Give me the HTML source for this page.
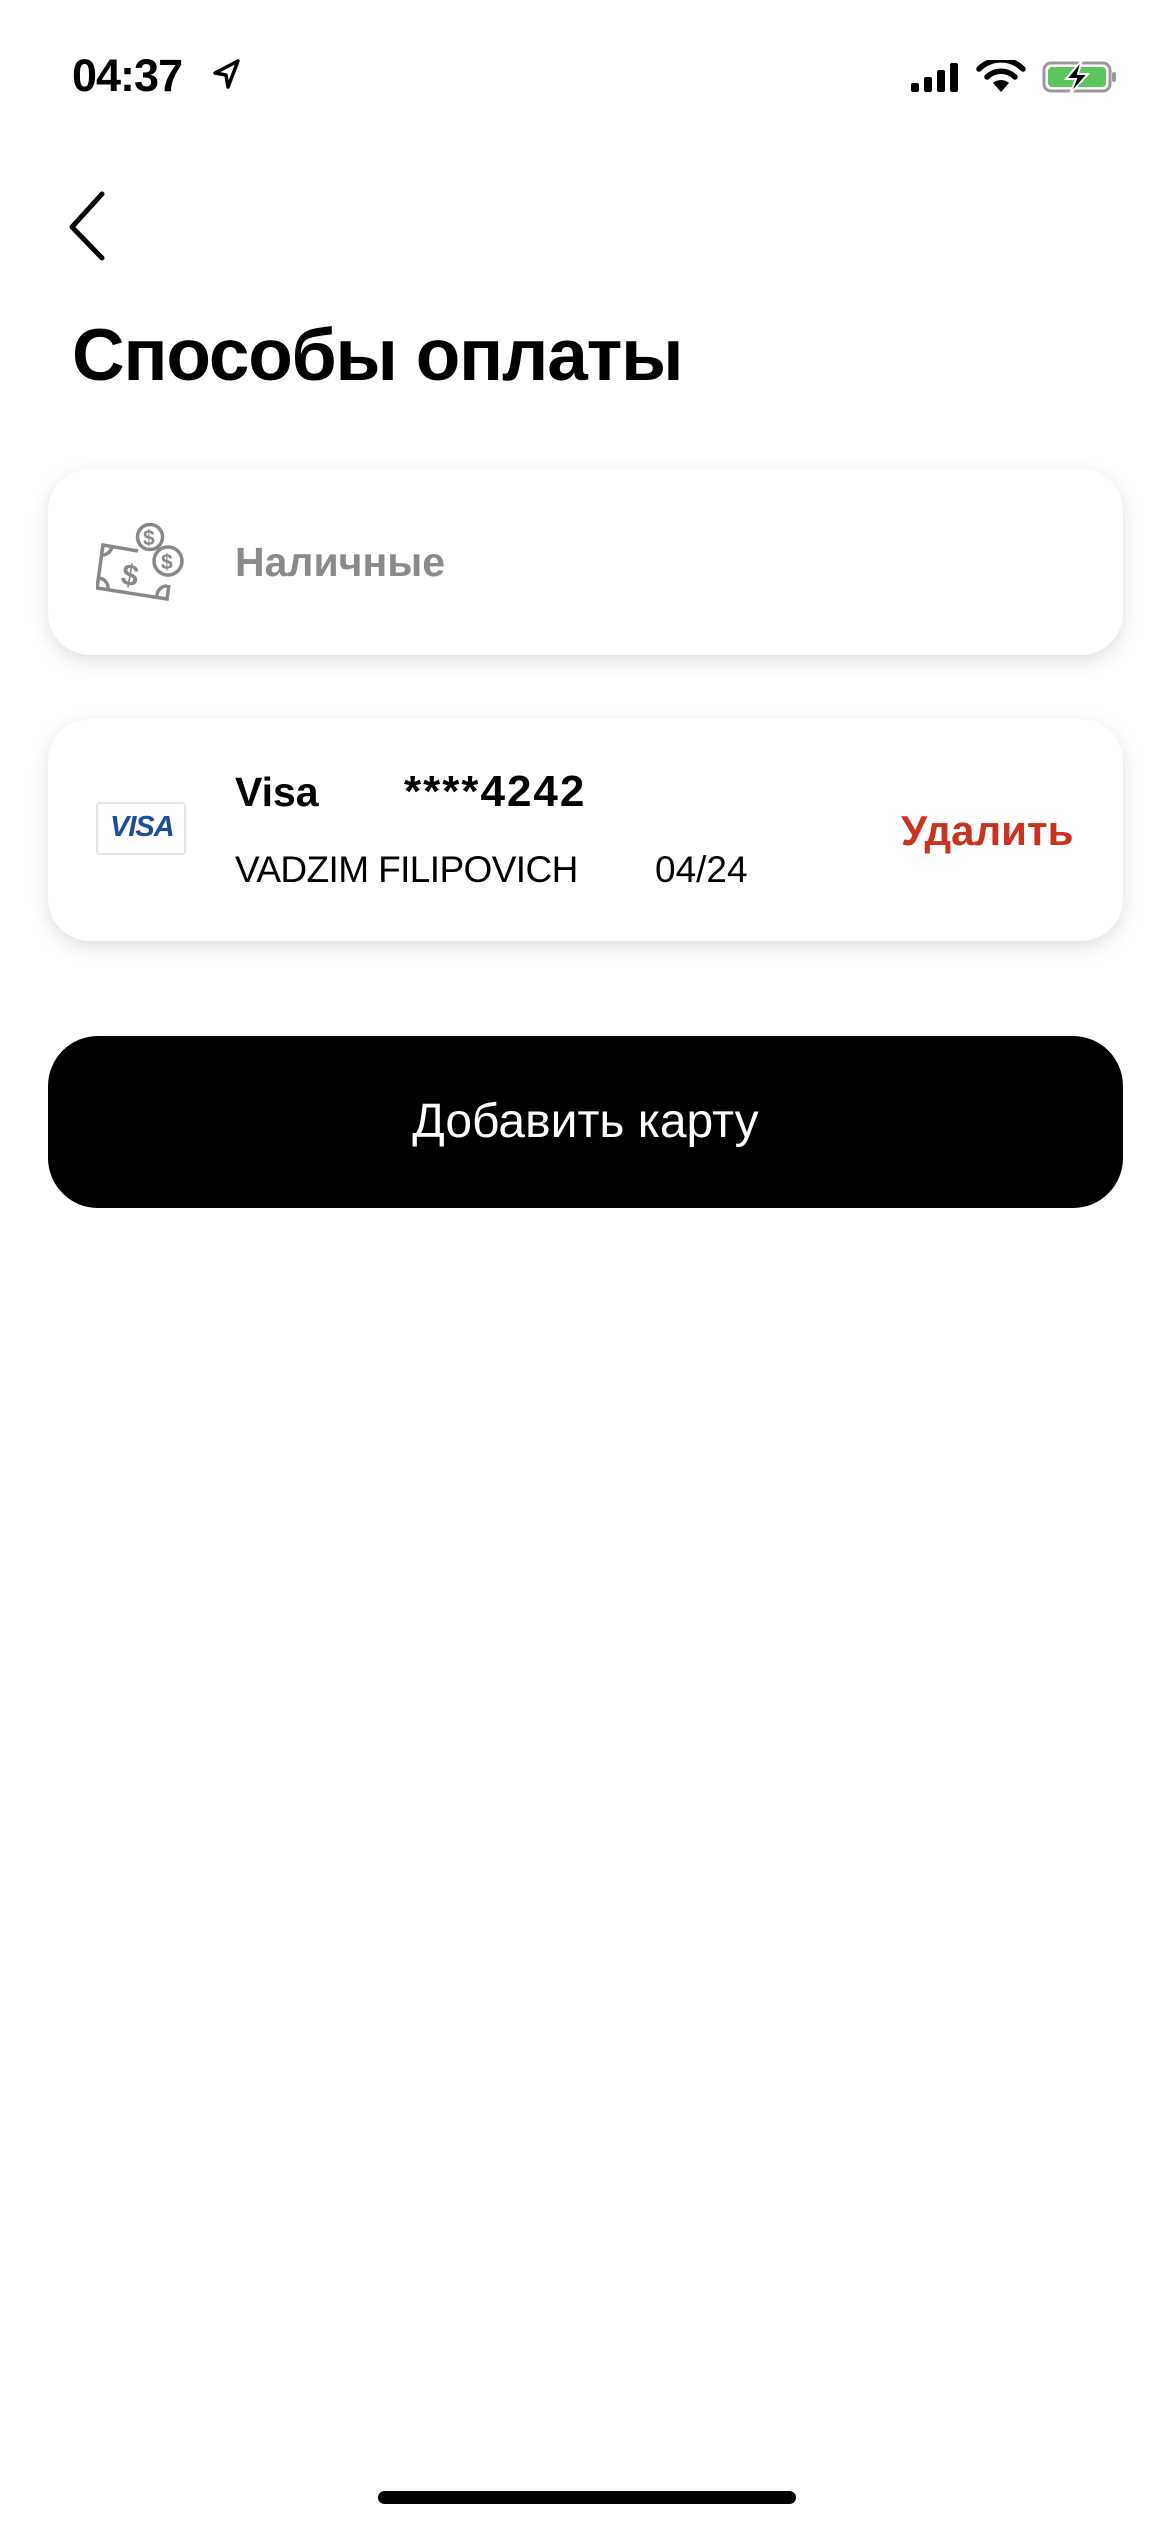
<!DOCTYPE html>
<html><head><meta charset="utf-8"><style>
*{margin:0;padding:0;box-sizing:border-box}
body{width:1170px;height:2532px;background:#fff;position:relative;font-family:"Liberation Sans",sans-serif;overflow:hidden}
.a{position:absolute;white-space:nowrap}
.card{position:absolute;left:48px;width:1075px;background:#fff;border-radius:42px;box-shadow:0 6px 18px rgba(0,0,0,0.13)}
</style></head><body>
<div class="a" style="left:72px;top:50px;font-size:45px;font-weight:bold;letter-spacing:-1px">04:37</div>
<svg class="a" style="left:212px;top:58px" width="30" height="32" viewBox="0 0 30 32"><path d="M26 3 L3 15 L14 17 L16 29 Z" fill="none" stroke="#000" stroke-width="3.5" stroke-linejoin="round"/></svg>
<svg class="a" style="left:908px;top:62px" width="60" height="32" viewBox="0 0 60 32">
<rect x="3" y="21" width="8" height="9" rx="2"/><rect x="16" y="15" width="8" height="15" rx="2"/><rect x="29" y="8" width="8" height="22" rx="2"/><rect x="42" y="1" width="8" height="29" rx="2"/>
</svg>
<svg class="a" style="left:975px;top:60px" width="52" height="34" viewBox="0 0 52 34">
<path d="M26 32 L18 23 A12 12 0 0 1 34 23 Z"/>
<path d="M12 17 A20 20 0 0 1 40 17" fill="none" stroke="#000" stroke-width="5.5" stroke-linecap="round"/>
<path d="M4 9 A31 31 0 0 1 48 9" fill="none" stroke="#000" stroke-width="5.5" stroke-linecap="round"/>
</svg>
<svg class="a" style="left:1042px;top:60px" width="76" height="34" viewBox="0 0 76 34">
<rect x="2" y="3" width="66" height="28" rx="7" fill="none" stroke="#999" stroke-width="3"/><rect x="6" y="7" width="58" height="20" rx="4" fill="#5cc65c"/><rect x="70" y="12" width="4" height="10" rx="2" fill="#999"/>
<path d="M40 0 L24 19 L34 19 L28 34 L46 14 L36 14 Z" fill="#000" stroke="#fff" stroke-width="2"/>
</svg>
<svg class="a" style="left:62px;top:190px" width="46" height="72" viewBox="0 0 46 72"><path d="M40 4 L10 37 L40 68" fill="none" stroke="#000" stroke-width="5" stroke-linecap="round" stroke-linejoin="round"/></svg>
<div class="a" style="left:72px;top:314px;font-size:73px;font-weight:bold;letter-spacing:-1.2px">Способы оплаты</div>

<div class="card" style="top:469px;height:186px"></div>
<svg class="a" style="left:96px;top:523px" width="92" height="80" viewBox="0 0 92 80" fill="none" stroke="#888" stroke-width="3.5">
<path d="M42 28 L7 22 L1 65 L71 76 L73 62"/><path d="M7 32 A10 10 0 0 0 16 23 M2 55 A10 10 0 0 1 12 66 M61 74 A10 10 0 0 1 71 63"/>
<text x="26" y="62" font-size="30" font-family="Liberation Sans" font-weight="bold" fill="#888" stroke="none" transform="rotate(10 32 50)">$</text>
<circle cx="54" cy="14" r="12.5"/><circle cx="72" cy="38" r="14"/>
<text x="47" y="22" font-size="21" font-family="Liberation Sans" font-weight="bold" fill="#888" stroke="none">$</text>
<text x="65" y="46" font-size="21" font-family="Liberation Sans" font-weight="bold" fill="#888" stroke="none">$</text>
</svg>
<div class="a" style="left:235px;top:539px;font-size:41px;font-weight:bold;color:#8a8a8a">Наличные</div>

<div class="card" style="top:719px;height:222px"></div>
<div class="a" style="left:96px;top:802px;width:90px;height:53px;border:2px solid #e6e6e6;border-radius:4px;background:#fff"></div>
<div class="a" style="left:110px;top:811px;font-size:29px;font-weight:bold;font-style:italic;color:#1a4d9a;letter-spacing:-1px">VISA</div>
<div class="a" style="left:235px;top:769px;font-size:41px;font-weight:bold">Visa</div>
<div class="a" style="left:404px;top:767px;font-size:44px;font-weight:bold;letter-spacing:2px">****4242</div>
<div class="a" style="left:235px;top:849px;font-size:37px;letter-spacing:-0.6px">VADZIM FILIPOVICH</div>
<div class="a" style="left:655px;top:849px;font-size:37px">04/24</div>
<div class="a" style="left:901px;top:807px;font-size:42px;font-weight:bold;color:#c8321e">Удалить</div>

<div class="a" style="left:48px;top:1036px;width:1075px;height:172px;background:#000;border-radius:50px;color:#fff;font-size:48px;text-align:center;line-height:172px">Добавить карту</div>
<div class="a" style="left:378px;top:2491px;width:418px;height:13px;border-radius:7px;background:#000"></div>
</body></html>
